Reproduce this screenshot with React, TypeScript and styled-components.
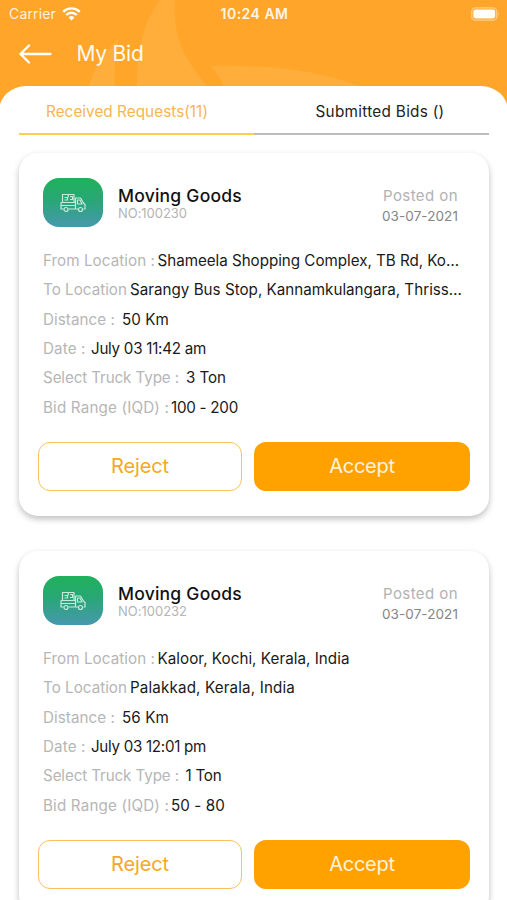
import React, { useLayoutEffect, useRef } from "react";
import styled, { createGlobalStyle } from "styled-components";

const Global = createGlobalStyle`
  * { box-sizing: border-box; }
  html, body { margin: 0; background: #fff; overflow: hidden; }
  body { font-family: Inter, "Liberation Sans", sans-serif; color: #111; }
`;

const Screen = styled.div`
  width: 507px;
  height: 900px;
  overflow: hidden;
  background: #ffa529;
  display: flex;
  flex-direction: column;
  position: relative;
`;

const Swirl = styled.svg`
  position: absolute;
  left: 0;
  top: 0;
`;

const StatusBar = styled.div`
  height: 28px;
  flex: none;
  padding: 0 7px 0 9px;
  display: grid;
  grid-template-columns: 1fr auto 1fr;
  align-items: center;
  position: relative;
`;

const Carrier = styled.div`
  display: flex;
  align-items: center;
  gap: 6px;
`;

const BatterySlot = styled.div`
  display: flex;
  justify-content: flex-end;
`;

const Header = styled.header`
  height: 58px;
  flex: none;
  padding: 0 19px 7px;
  display: flex;
  align-items: center;
  gap: 24.5px;
  position: relative;
`;

const Sheet = styled.main`
  flex: 1;
  min-height: 0;
  background: #fff;
  border-radius: 27px 27px 0 0 / 25px 25px 0 0;
  position: relative;
  margin: 0 -1px;
  padding: 0 19px 0 20px;
`;

const Tabs = styled.nav`
  display: grid;
  grid-template-columns: 1fr 1fr;
  height: 49px;
`;

const Tab = styled.div<{ $active?: boolean }>`
  display: flex;
  justify-content: center;
  align-items: center;
  padding-top: 5px;
  padding-right: ${(p) => (p.$active ? "19px" : "0")};
  padding-left: ${(p) => (p.$active ? "0" : "17px")};
  border-bottom: 2px solid ${(p) => (p.$active ? "#fbd04e" : "#bcbcbc")};
`;

const List = styled.div`
  display: flex;
  flex-direction: column;
  gap: 35px;
  padding-top: 18px;
`;

const CardBox = styled.article`
  height: 363px;
  flex: none;
  background: #fff;
  border-radius: 19px;
  box-shadow: 0 3px 6px rgba(0, 0, 0, 0.25);
  padding: 25px 19px 0;
`;

const CardHead = styled.div`
  display: flex;
  height: 49px;
  padding: 0 12px 0 5px;
  gap: 15px;
`;

const Tile = styled.div`
  width: 60px;
  height: 49px;
  border-radius: 16px;
  background: linear-gradient(#20b15b, #28a776 45%, #4798ae);
  display: flex;
  align-items: center;
  justify-content: center;
`;

const Names = styled.div`
  flex: 1;
  display: flex;
  flex-direction: column;
  padding-top: 8px;
`;

const Posted = styled.div`
  display: flex;
  flex-direction: column;
  align-items: flex-end;
  padding-top: 8px;
`;

const Rows = styled.div`
  margin-top: 19.4px;
  padding-left: 5px;
`;

const Row = styled.div`
  display: flex;
  align-items: center;
  height: 29.35px;
`;

const Buttons = styled.div`
  display: grid;
  grid-template-columns: 204px 216px;
  gap: 12px;
  margin-top: 19.5px;
`;

const Button = styled.button<{ $filled?: boolean }>`
  height: 49px;
  border-radius: 12px;
  border: ${(p) => (p.$filled ? "0" : "1.5px solid #f9c060")};
  background: ${(p) => (p.$filled ? "#ffa200" : "#fff")};
  display: flex;
  justify-content: center;
  align-items: center;
  padding: 0;
  font-family: inherit;
`;

type Kind = "status" | "clock" | "title" | "tabOn" | "tab" | "name" | "number" | "posted" | "date" | "label" | "value" | "reject" | "accept";

const kinds: Record<Kind, [size: number, weight: number, color: string, line: number]> = {
  status: [14, 400, "#fff1dc", 18],
  clock: [14, 600, "#fff5e6", 18],
  title: [21, 400, "#fffaf2", 28],
  tabOn: [15.3, 400, "#f8b552", 20],
  tab: [15.3, 400, "#222", 20],
  name: [17.5, 500, "#111", 20],
  number: [13, 400, "#b4b4b4", 14],
  posted: [15, 400, "#b2b2b2", 20],
  date: [13.5, 400, "#858585", 20],
  label: [15.2, 400, "#b6b6b6", 20],
  value: [15.2, 400, "#1a1a1a", 20],
  reject: [20, 400, "#f6a81f", 26],
  accept: [20, 400, "#fff3dc", 26],
};

const TextSpan = styled.span<{ $kind: Kind; $gap?: number }>`
  display: block;
  flex: none;
  white-space: nowrap;
  margin-left: ${(p) => p.$gap ?? 0}px;
  font-size: ${(p) => kinds[p.$kind][0]}px;
  font-weight: ${(p) => kinds[p.$kind][1]};
  color: ${(p) => kinds[p.$kind][2]};
  line-height: ${(p) => kinds[p.$kind][3]}px;
`;

/** Single line of text tracked so that it spans the given width. */
function Text({ kind, width, gap, children }: { kind: Kind; width: number; gap?: number; children: string }) {
  const ref = useRef<HTMLSpanElement>(null);
  useLayoutEffect(() => {
    const el = ref.current!;
    const range = document.createRange();
    range.selectNodeContents(el);
    el.style.letterSpacing = "0px";
    const spacing = (width - range.getBoundingClientRect().width) / children.length;
    el.style.letterSpacing = `${spacing}px`;
  }, [width, children]);
  return (
    <TextSpan ref={ref} $kind={kind} $gap={gap}>
      {children}
    </TextSpan>
  );
}

const Wifi = () => (
  <svg width="19" height="14" viewBox="0 0 19 14" fill="none" stroke="#fff" strokeWidth="2.4">
    <path d="M1.2 4.8a11.8 11.8 0 0 1 16.6 0" />
    <path d="M4.2 8a7.5 7.5 0 0 1 10.6 0" />
    <path d="M9.5 13.4 6.6 10.5a4.2 4.2 0 0 1 5.8 0Z" fill="#fff" stroke="none" />
  </svg>
);

const Battery = () => (
  <svg width="29" height="14" viewBox="0 0 29 14">
    <rect x=".8" y=".8" width="25" height="12.4" rx="3.8" fill="none" stroke="#ffd08c" strokeWidth="1.3" />
    <rect x="2.4" y="2.4" width="21.8" height="9.2" rx="2.4" fill="#fff" />
    <path d="M27.3 4.8q1.6 2.2 0 4.4Z" fill="#ffd08c" />
  </svg>
);

const Arrow = () => (
  <svg width="33" height="20" viewBox="0 0 33 20" fill="none" stroke="#fff" strokeWidth="2.3" strokeLinecap="round" strokeLinejoin="round">
    <path d="M31.5 10H1.5M10 1.5 1.5 10l8.500 8.500" />
  </svg>
);

const Truck = () => (
  <svg width="26" height="20" viewBox="0 0 26 20" fill="none" stroke="#c5eadb" strokeWidth="1.2" strokeLinejoin="round">
    <path d="M2.500 9.500V1.500H14V9.500M8.200 1.500v3M4.500 4.500h3v2.500h-3M10 3.500h2.500v3H10" />
    <path d="M1 9.500h14.500M1 9.500V16h2.500M1 12.500h14.500M8.500 16h9.500M15.500 16V5h5l3 5 1.500 1.500V16h-1.500M17.500 7h2.500l2 4h-4.500Z" />
    <circle cx="6" cy="16.500" r="2" />
    <circle cx="20.500" cy="16.500" r="2" />
  </svg>
);

type Field = [label: string, labelWidth: number, gap: number, value: string, valueWidth: number];
interface Bid {
  no: string;
  fields: Field[];
}

const bids: Bid[] = [
  {
    no: "NO:100230",
    fields: [
      ["From Location :", 112, 2.5, "Shameela Shopping Complex, TB Rd, Ko…", 301.5],
      ["To Location", 84, 3, "Sarangy Bus Stop, Kannamkulangara, Thriss…", 332],
      ["Distance :", 72, 7, "50 Km", 47],
      ["Date :", 42.5, 5.5, "July 03 11:42 am", 115],
      ["Select Truck Type :", 136, 7, "3 Ton", 40],
      ["Bid Range (IQD) :", 126, 2, "100 - 200", 67],
    ],
  },
  {
    no: "NO:100232",
    fields: [
      ["From Location :", 112, 2.5, "Kaloor, Kochi, Kerala, India", 192],
      ["To Location", 84, 3, "Palakkad, Kerala, India", 165],
      ["Distance :", 72, 7, "56 Km", 47],
      ["Date :", 42.5, 5.5, "July 03 12:01 pm", 115],
      ["Select Truck Type :", 136, 6.5, "1 Ton", 36],
      ["Bid Range (IQD) :", 126, 2, "50 - 80", 54],
    ],
  },
];

const BidCard = ({ bid }: { bid: Bid }) => (
  <CardBox>
    <CardHead>
      <Tile>
        <Truck />
      </Tile>
      <Names>
        <Text kind="name" width={124}>Moving Goods</Text>
        <Text kind="number" width={69}>{bid.no}</Text>
      </Names>
      <Posted>
        <Text kind="posted" width={75}>Posted on</Text>
        <Text kind="date" width={76}>03-07-2021</Text>
      </Posted>
    </CardHead>
    <Rows>
      {bid.fields.map(([label, lw, gap, value, vw]) => (
        <Row key={label}>
          <Text kind="label" width={lw}>{label}</Text>
          <Text kind="value" width={vw} gap={gap}>{value}</Text>
        </Row>
      ))}
    </Rows>
    <Buttons>
      <Button>
        <Text kind="reject" width={58}>Reject</Text>
      </Button>
      <Button $filled>
        <Text kind="accept" width={65.5}>Accept</Text>
      </Button>
    </Buttons>
  </CardBox>
);

export default function App() {
  return (
    <>
      <Global />
      <Screen>
        <Swirl width="507" height="110" fill="#ffad3b">
          <path d="M160 0C146 18 136 45 137 90H210C188 62 172 42 175 0Z" />
          <path d="M119 38C101 55 93 70 88 90H115C114 70 115 55 119 38Z" />
          <path d="M211 66C270 64 322 70 368 90H225C222 80 217 74 211 66Z" />
        </Swirl>
        <StatusBar>
          <Carrier>
            <Text kind="status" width={47}>Carrier</Text>
            <Wifi />
          </Carrier>
          <Text kind="clock" width={68}>10:24 AM</Text>
          <BatterySlot>
            <Battery />
          </BatterySlot>
        </StatusBar>
        <Header>
          <Arrow />
          <Text kind="title" width={67}>My Bid</Text>
        </Header>
        <Sheet>
          <Tabs>
            <Tab $active>
              <Text kind="tabOn" width={162}>Received Requests(11)</Text>
            </Tab>
            <Tab>
              <Text kind="tab" width={129}>Submitted Bids ()</Text>
            </Tab>
          </Tabs>
          <List>
            {bids.map((bid) => (
              <BidCard key={bid.no} bid={bid} />
            ))}
          </List>
        </Sheet>
      </Screen>
    </>
  );
}
